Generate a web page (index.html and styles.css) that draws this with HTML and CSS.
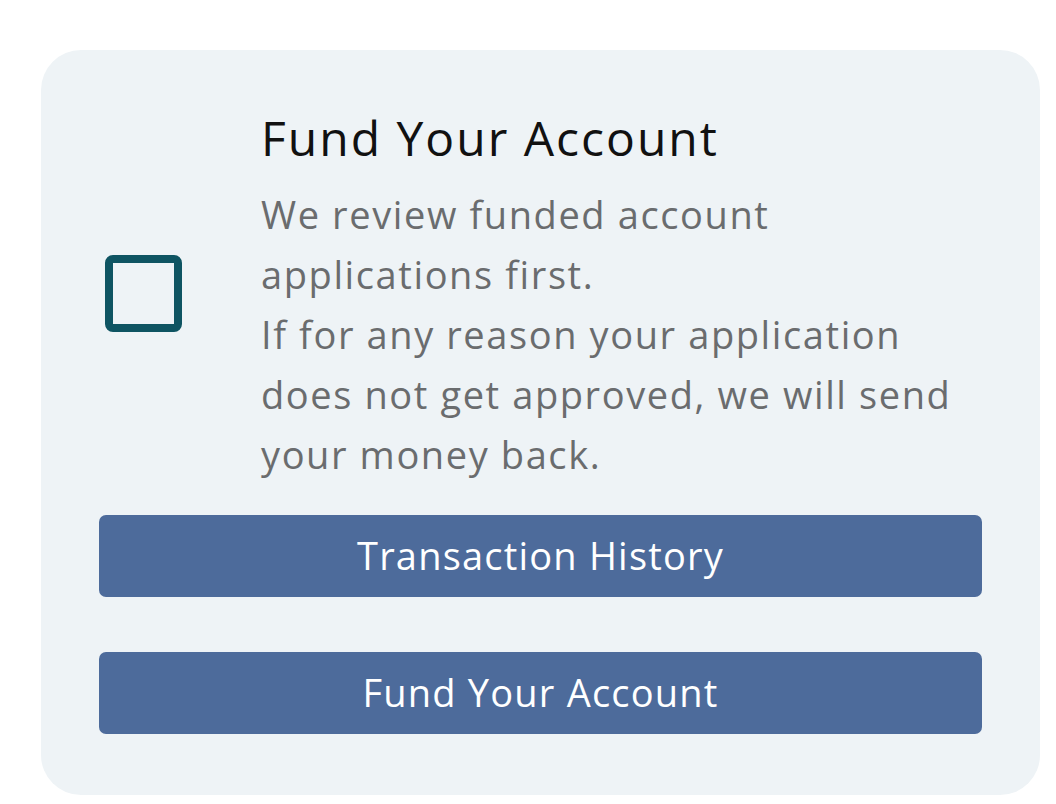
FILE: index.html
```html
<!DOCTYPE html>
<html lang="en">
<head>
    <meta charset="UTF-8">
    <meta name="viewport" content="width=device-width, initial-scale=1.0">
    <title>Fund Your Account</title>
    <link rel="stylesheet" href="styles.css">
</head>
<body>
    <div class="card">
        <div class="info">
            <div class="check-col">
                <span class="checkbox"></span>
            </div>
            <div class="text">
                <h2>Fund Your Account</h2>
                <p>We review funded account applications first.<br>
                If for any reason your application does not get approved, we will send your money back.</p>
            </div>
        </div>

        <div class="actions">
            <button class="btn">Transaction History</button>
            <button class="btn">Fund Your Account</button>
        </div>
    </div>
</body>
</html>
```

FILE: styles.css
```css
body {
    margin: 0;
    padding: 50px 0 0 41px;
    background: #ffffff;
    font-family: 'Open Sans', Lato, sans-serif;
}
.card {
    width: 999px;
    box-sizing: border-box;
    background: #eef3f6;
    border-radius: 40px;
    padding: 58px 58px 61px 58px;
}
.info {
    display: flex;
    align-items: center;
}
.check-col {
    width: 162px;
    flex-shrink: 0;
    display: flex;
}
.checkbox {
    display: block;
    width: 61px;
    height: 61px;
    margin: 0 0 6px 6px;
    border: 8px solid #0e5462;
    border-radius: 8px;
}
.text {
    width: 710px;
}
h2 {
    margin: 0 0 16px 0;
    font-size: 48px;
    font-weight: 400;
    letter-spacing: 2px;
    line-height: 60px;
    color: #111;
}
p {
    margin: 0;
    font-size: 38px;
    letter-spacing: 1.6px;
    line-height: 60px;
    color: #6a6c6e;
}
.actions {
    display: flex;
    flex-direction: column;
    gap: 55px;
    margin-top: 31px;
}
.btn {
    height: 82px;
    border: none;
    border-radius: 7px;
    background: #4d6b9b;
    color: #fff;
    font-family: inherit;
    font-size: 38px;
    letter-spacing: 1.2px;
    padding-bottom: 4px;
    cursor: pointer;
}
```
